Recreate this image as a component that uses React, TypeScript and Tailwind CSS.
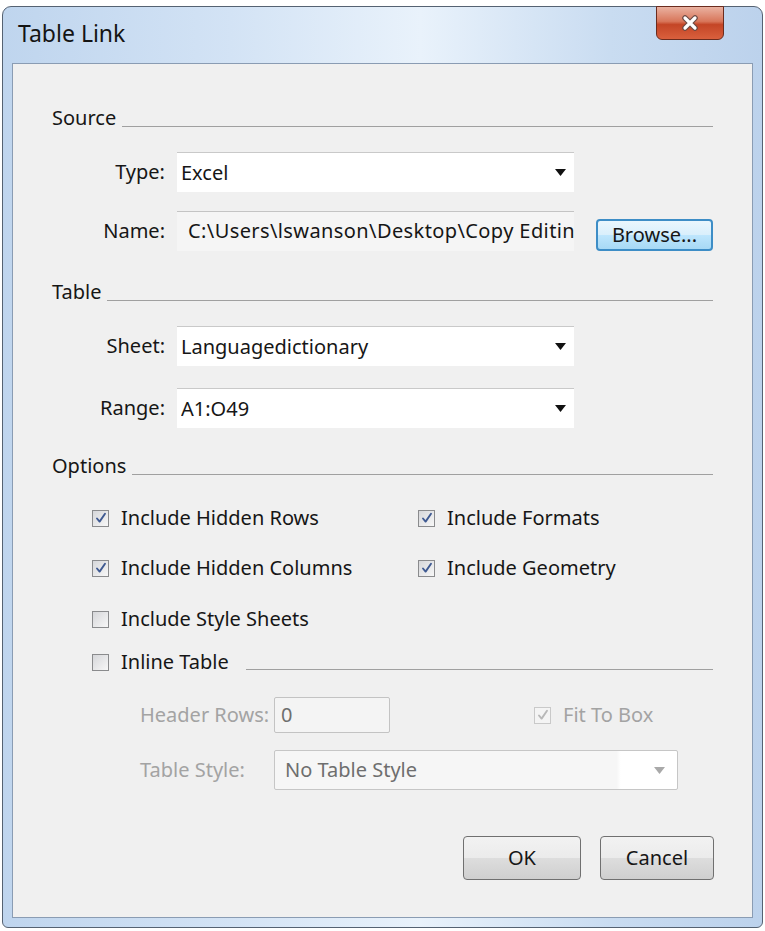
import React from "react";

const font = { fontFamily: '"Noto Sans", "Segoe UI", Arial, sans-serif' };

function Arrow({ disabled = false }: { disabled?: boolean }) {
  return (
    <svg width="11" height="7" viewBox="0 0 11 7" className="shrink-0">
      <path d="M0 0 L11 0 L5.5 7 Z" fill={disabled ? "#a9a9a9" : "#111111"} />
    </svg>
  );
}

function Check({ checked, disabled = false }: { checked: boolean; disabled?: boolean }) {
  return (
    <div
      className={
        "w-[17px] h-[17px] shrink-0 border flex items-center justify-center " +
        (disabled
          ? "border-[#c9c9c9] bg-[#f4f4f4]"
          : "border-[#8a8b8d] bg-[linear-gradient(135deg,#d6d7da,#f7f7f7)]")
      }
    >
      {checked && (
        <svg width="12" height="12" viewBox="0 0 12 12">
          <path
            d="M2 6.5 L4.6 9.6 L10 1.8"
            fill="none"
            stroke={disabled ? "#b8b8b8" : "#3f5a92"}
            strokeWidth="1.9"
            strokeLinecap="round"
            strokeLinejoin="round"
          />
        </svg>
      )}
    </div>
  );
}

function SectionHeader({ label }: { label: string }) {
  return (
    <div className="flex items-end h-[24px]">
      <span className="text-[20px] leading-[24px] text-[#161616]">{label}</span>
      <div className="flex-1 ml-[6px] mb-[3px] border-b border-[#a0a0a0]" />
    </div>
  );
}

function SelectBox({ value }: { value: string }) {
  return (
    <div className="w-[397px] h-[40px] bg-white border-t border-[#c9c9c9] flex items-center pl-[4px] pr-[8px]">
      <span className="flex-1 text-[20px] text-[#161616] truncate">{value}</span>
      <Arrow />
    </div>
  );
}

function CheckRow({ label, checked }: { label: string; checked: boolean }) {
  return (
    <div className="flex items-center gap-[12px] h-[24px]">
      <Check checked={checked} />
      <span className="text-[20px] text-[#161616] whitespace-nowrap">{label}</span>
    </div>
  );
}

function FieldLabel({ text }: { text: string }) {
  return <span className="w-[113px] shrink-0 text-right text-[20px] text-[#161616]">{text}</span>;
}

export default function App() {
  return (
    <div className="w-[765px] h-[931px] bg-white overflow-hidden" style={font}>
      <div className="ml-[2px] mt-[6px] w-[761px] h-[922px] rounded-t-[9px] rounded-b-[6px] border border-[#556272] bg-[linear-gradient(90deg,#bfd5ee_0%,#d3e3f5_30%,#e9f2fb_55%,#c9dcf1_80%,#bcd2ec_100%)] flex flex-col">
        <div className="h-[56px] flex items-start justify-between pl-[15px] pr-[38px]">
          <span className="mt-[9px] text-[23px] text-[#141414]">Table Link</span>
          <div className="w-[68px] h-[34px] -mt-[1px] rounded-b-[6px] border border-[#6b2c1e] bg-[linear-gradient(180deg,#eab2a1_0%,#d8765a_45%,#c44526_55%,#d9603d_100%)] flex items-center justify-center">
            <svg width="20" height="18" viewBox="0 0 20 18">
              <path d="M5 4 L15 14 M15 4 L5 14" stroke="#6b4a44" strokeWidth="5.5" strokeLinecap="round" />
              <path d="M5 4 L15 14 M15 4 L5 14" stroke="#ffffff" strokeWidth="3.2" strokeLinecap="round" />
            </svg>
          </div>
        </div>
        <div className="mx-[9px] mb-[9px] flex-1 border border-[#8a9cb3] bg-[#f0f0f0] flex flex-col pl-[39px] pr-[39px] pt-[42px]">
          <SectionHeader label="Source" />
          <div className="mt-[22px] flex items-center">
            <FieldLabel text="Type:" />
            <div className="ml-[12px]">
              <SelectBox value="Excel" />
            </div>
          </div>
          <div className="mt-[18px] flex items-center">
            <FieldLabel text="Name:" />
            <div className="ml-[12px] w-[397px] h-[40px] bg-[#f5f5f5] border-t border-[#c4c4c4] flex items-center pl-[11px] overflow-hidden">
              <span className="text-[20px] tracking-[0.4px] text-[#161616] whitespace-nowrap">
                C:\Users\lswanson\Desktop\Copy Editing
              </span>
            </div>
            <div className="ml-[22px] mt-[9px] w-[117px] h-[32px] rounded-[4px] border-2 border-[#3d8dc6] bg-[linear-gradient(180deg,#eaf6fd_0%,#d9effc_50%,#bee6fd_51%,#a7d9f5_100%)] flex items-center justify-center">
              <span className="text-[20px] leading-[24px] text-[#161616]">Browse...</span>
            </div>
          </div>
          <div className="mt-[29px]">
            <SectionHeader label="Table" />
          </div>
          <div className="mt-[22px] flex items-center">
            <FieldLabel text="Sheet:" />
            <div className="ml-[12px]">
              <SelectBox value="Languagedictionary" />
            </div>
          </div>
          <div className="mt-[22px] flex items-center">
            <FieldLabel text="Range:" />
            <div className="ml-[12px]">
              <SelectBox value="A1:O49" />
            </div>
          </div>
          <div className="mt-[26px]">
            <SectionHeader label="Options" />
          </div>
          <div className="pl-[40px] grid grid-cols-[326px_1fr]">
            <div className="mt-[28px]">
              <CheckRow label="Include Hidden Rows" checked />
            </div>
            <div className="mt-[28px]">
              <CheckRow label="Include Formats" checked />
            </div>
            <div className="mt-[26px]">
              <CheckRow label="Include Hidden Columns" checked />
            </div>
            <div className="mt-[26px]">
              <CheckRow label="Include Geometry" checked />
            </div>
            <div className="mt-[27px] col-span-2">
              <CheckRow label="Include Style Sheets" checked={false} />
            </div>
            <div className="mt-[19px] col-span-2 flex items-end">
              <CheckRow label="Inline Table" checked={false} />
              <div className="flex-1 ml-[17px] mb-[4px] border-b border-[#a0a0a0]" />
            </div>
          </div>
          <div className="mt-[23px] pl-[88px] flex items-center h-[36px]">
            <span className="w-[134px] text-[20px] text-[#a3a3a3] whitespace-nowrap">Header Rows:</span>
            <div className="w-[116px] h-[36px] rounded-[2px] border border-[#c3c3c3] bg-[#f4f4f4] flex items-center pl-[6px]">
              <span className="text-[20px] text-[#6e6e6e]">0</span>
            </div>
            <div className="ml-[144px]">
              <div className="flex items-center gap-[12px]">
                <Check checked disabled />
                <span className="text-[20px] text-[#a3a3a3]">Fit To Box</span>
              </div>
            </div>
          </div>
          <div className="mt-[17px] pl-[88px] flex items-center h-[40px]">
            <span className="w-[134px] text-[20px] text-[#a3a3a3] whitespace-nowrap">Table Style:</span>
            <div className="w-[404px] h-[40px] rounded-[2px] border border-[#c6c6c6] bg-[linear-gradient(90deg,#f6f6f6_0%,#f6f6f6_85%,#ffffff_86%)] flex items-center pl-[10px] pr-[12px]">
              <span className="flex-1 text-[20px] text-[#6e6e6e]">No Table Style</span>
              <Arrow disabled />
            </div>
          </div>
          <div className="mt-[46px] flex justify-end gap-[19px] -mr-[1px]">
            <div className="w-[118px] h-[44px] rounded-[4px] border border-[#707070] bg-[linear-gradient(180deg,#f2f2f2_0%,#ebebeb_50%,#dddddd_51%,#cfcfcf_100%)] flex items-center justify-center">
              <span className="text-[20px] text-[#161616]">OK</span>
            </div>
            <div className="w-[114px] h-[44px] rounded-[4px] border border-[#707070] bg-[linear-gradient(180deg,#f2f2f2_0%,#ebebeb_50%,#dddddd_51%,#cfcfcf_100%)] flex items-center justify-center">
              <span className="text-[20px] text-[#161616]">Cancel</span>
            </div>
          </div>
        </div>
      </div>
    </div>
  );
}
